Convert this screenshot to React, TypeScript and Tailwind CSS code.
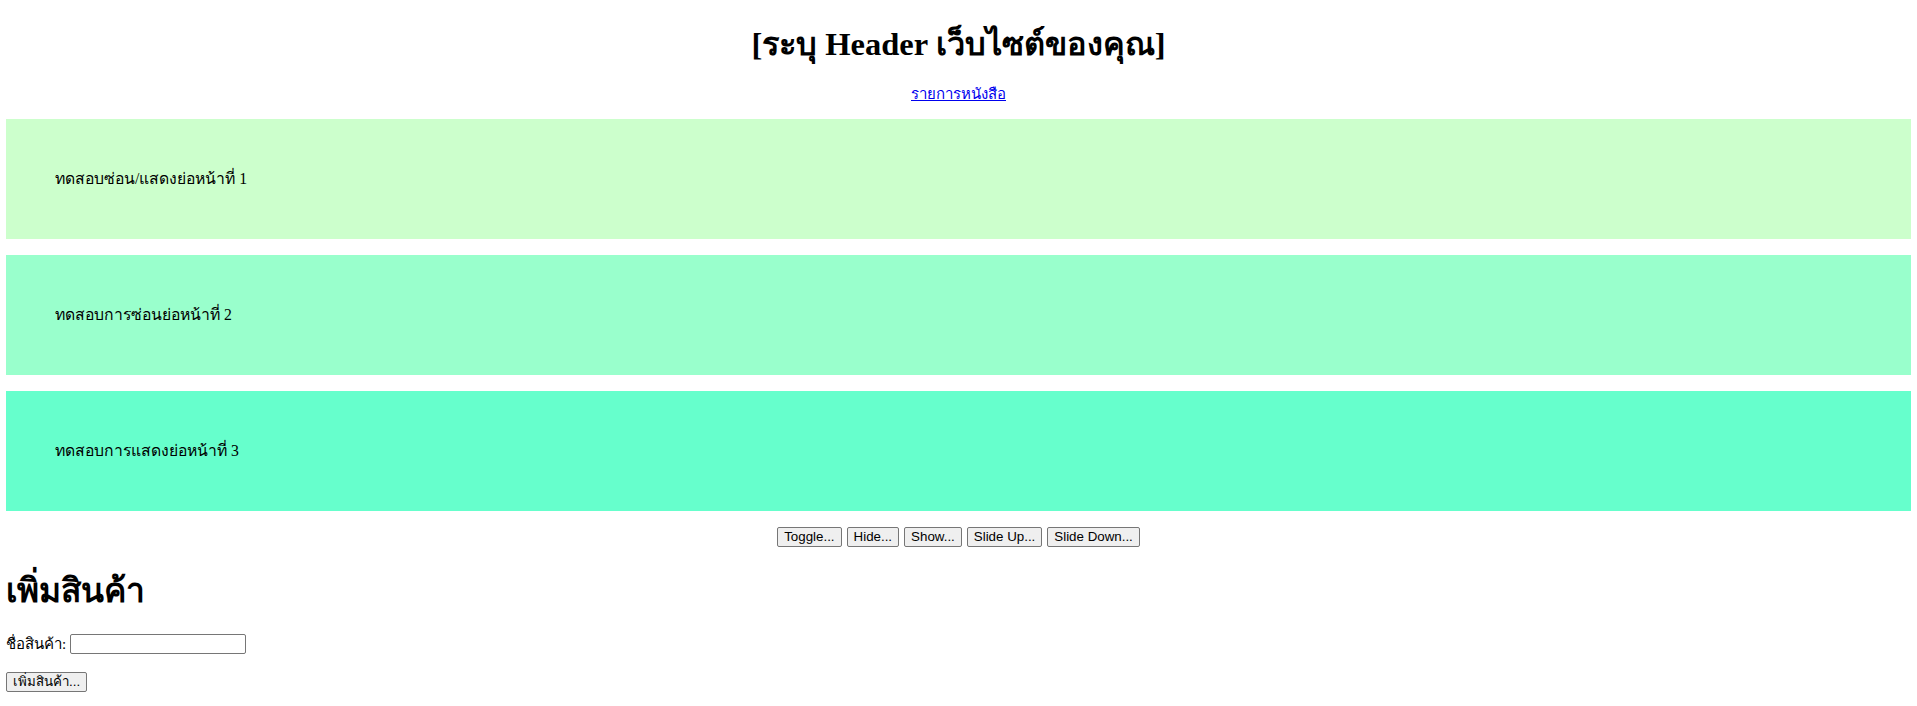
const panels = [
  { text: "ทดสอบซ่อน/แสดงย่อหน้าที่ 1", bg: "bg-[#ccffcc]" },
  { text: "ทดสอบการซ่อนย่อหน้าที่ 2", bg: "bg-[#99ffcc]" },
  { text: "ทดสอบการแสดงย่อหน้าที่ 3", bg: "bg-[#66ffcc]" },
];

const actions = ["Toggle...", "Hide...", "Show...", "Slide Up...", "Slide Down..."];

function NativeButton({ label }: { label: string }) {
  return (
    <button
      type="button"
      className="h-[20px] rounded-[2px] border border-[#767676] bg-[#efefef] px-[6px] font-['Liberation_Sans',Arial,sans-serif] text-[13.33px] leading-none text-black"
    >
      {label}
    </button>
  );
}

export default function App() {
  return (
    <div className="min-h-[706px] bg-white px-[6px] font-['Liberation_Serif','Times_New_Roman',serif] text-black">
      <h1 className="pt-[26px] text-center text-[32.5px] font-bold leading-[36px]">
        [ระบุ Header เว็บไซต์ของคุณ]
      </h1>

      <nav className="mt-[23px] text-center text-[15px] leading-[18px]">
        <a href="#" className="text-[#0000ee] underline">
          รายการหนังสือ
        </a>
      </nav>

      <div className="mt-[16px] flex flex-col gap-[16px]">
        {panels.map((panel) => (
          <div key={panel.text} className={`flex h-[120px] items-center pl-[49px] ${panel.bg}`}>
            <p className="text-[15.75px] leading-[20px]">{panel.text}</p>
          </div>
        ))}
      </div>

      <div className="mt-[16px] flex justify-center gap-[5px]">
        {actions.map((a) => (
          <NativeButton key={a} label={a} />
        ))}
      </div>

      <h2 className="mt-[22px] font-['Noto_Sans',sans-serif] text-[33.5px] font-bold leading-[40px]">
        เพิ่มสินค้า
      </h2>

      <form className="mt-[25px]" onSubmit={(e) => e.preventDefault()}>
        <div className="flex items-center gap-[4px] text-[15px] leading-[20px]">
          <label htmlFor="product">ชื่อสินค้า:</label>
          <input
            id="product"
            type="text"
            className="h-[20px] w-[176px] rounded-[2px] border border-[#767676] bg-white px-[2px] text-[13px]"
          />
        </div>
        <div className="mt-[15px]">
          <NativeButton label="เพิ่มสินค้า..." />
        </div>
      </form>
    </div>
  );
}
